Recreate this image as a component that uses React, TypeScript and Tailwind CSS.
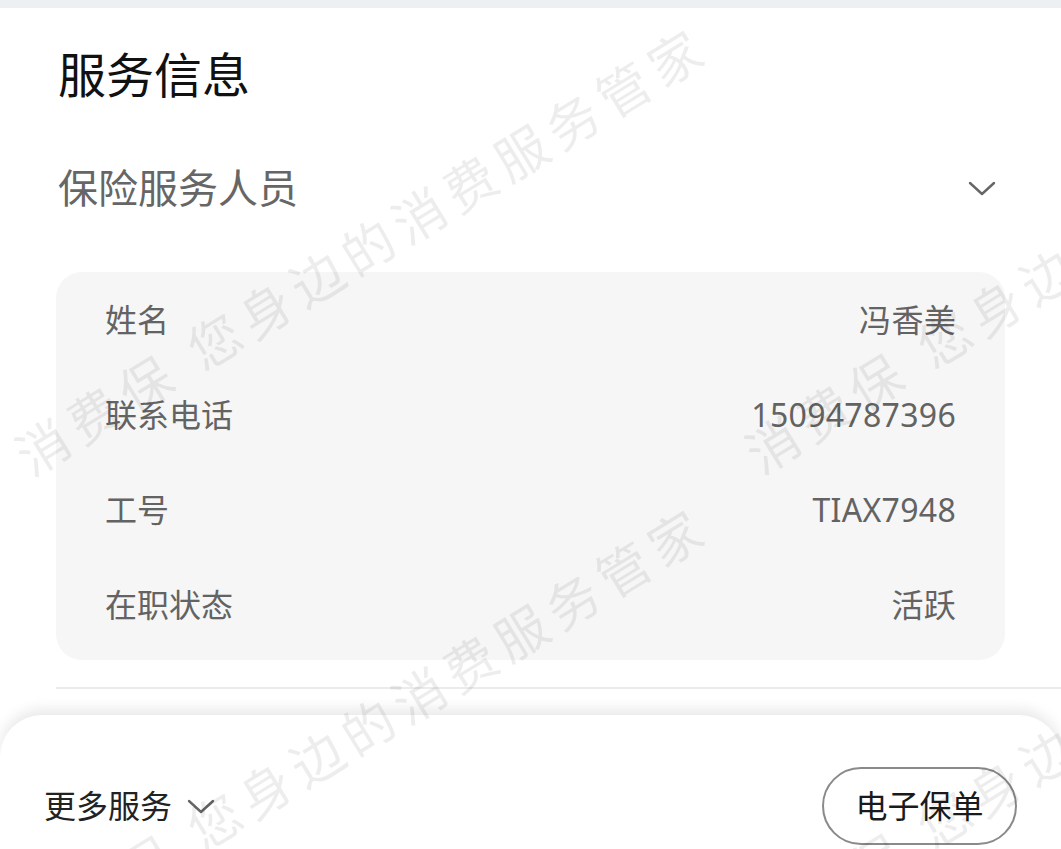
import React from "react";

const rows = [
  { label: "姓名", value: "冯香美" },
  { label: "联系电话", value: "15094787396" },
  { label: "工号", value: "TIAX7948" },
  { label: "在职状态", value: "活跃" },
];

// centre of the first glyph of each watermark copy
const marks = [
  { x: 43, y: 447 },
  { x: 773, y: 445 },
  { x: 43, y: 927 },
  { x: 773, y: 925 },
];

function Chevron({ className }: { className?: string }) {
  return (
    <svg viewBox="0 0 28 15" className={className} fill="none">
      <path
        d="M2 2 L14 13 L26 2"
        stroke="currentColor"
        strokeWidth="2.4"
        strokeLinecap="round"
        strokeLinejoin="round"
      />
    </svg>
  );
}

export default function App() {
  return (
    <div
      className="relative h-[849px] w-full overflow-hidden bg-white"
      style={{ fontFamily: '"Noto Sans", "Noto Sans CJK SC", sans-serif' }}
    >
      <div className="h-2 bg-[#edf0f3]" />

      <div className="px-[58px] pt-[35px]">
        <h1 className="text-[48px] leading-[64px] text-[#111]">服务信息</h1>
        <div className="mt-[41px] flex h-[80px] items-center justify-between">
          <span className="text-[40px] text-[#666]">保险服务人员</span>
          <Chevron className="mr-[7px] h-[15px] w-[28px] text-[#666]" />
        </div>
      </div>

      <div className="mx-[56px] mt-[44px] rounded-[26px] bg-[#f6f6f6] px-[49px] pb-[8px]">
        {rows.map((r) => (
          <div key={r.label} className="flex h-[95px] items-center justify-between text-[32px] text-[#636363]">
            <span>{r.label}</span>
            <span className="tracking-[0.3px]">{r.value}</span>
          </div>
        ))}
      </div>

      <div className="ml-[56px] mt-[27px] h-[2px] bg-[#ebebeb]" />

      <div className="mt-[26px] h-[200px] rounded-t-[42px] bg-white px-[44px] pt-[52px] shadow-[0_-6px_14px_rgba(0,0,0,0.09)]">
        <div className="flex items-center justify-between">
          <div className="flex items-center gap-[15px]">
            <span className="text-[32px] text-[#222]">更多服务</span>
            <Chevron className="h-[15px] w-[28px] text-[#666]" />
          </div>
          <button className="flex h-[78px] w-[195px] items-center justify-center rounded-full border-2 border-[#8a8a8a] text-[32px] text-[#1a1a1a]">
            电子保单
          </button>
        </div>
      </div>

      {marks.map((m, i) => (
        <div
          key={i}
          className="pointer-events-none absolute origin-[26px_50%] -rotate-[31.6deg] whitespace-nowrap text-[52px] leading-[52px] tracking-[8px] text-black/[0.07]"
          style={{ left: m.x - 26, top: m.y - 26 }}
        >
          消费保 您身边的消费服务管家
        </div>
      ))}
    </div>
  );
}
